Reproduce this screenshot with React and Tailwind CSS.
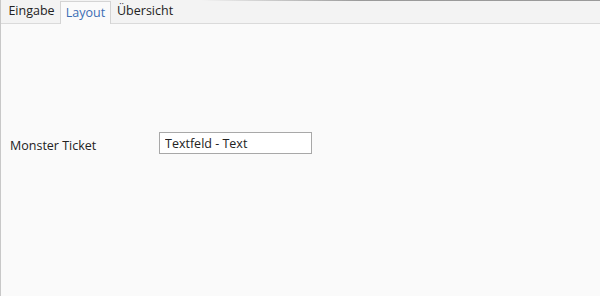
export default function App() {
  const tabs = [
    { label: "Eingabe", cls: "w-[59px] pl-[2px]" },
    { label: "Layout", cls: "w-[51px]", active: true },
    { label: "Übersicht", cls: "pl-[6px]" },
  ];

  return (
    <div className="w-[600px] h-[296px] flex flex-col bg-[#fafafa] border-l border-[#c8c8c8] font-['Open_Sans',sans-serif] text-[12.5px] text-[#222]">
      {/* Tab bar */}
      <div className="relative h-6 flex items-end bg-[#f3f3f3] border-b border-[#dadada]">
        <div className="absolute top-0 left-[200px] right-0 h-px bg-gradient-to-r from-[#f3f3f3] to-[#9a9a9a] to-40%" />
        {tabs.map((t) => (
          <div
            key={t.label}
            className={
              t.active
                ? `${t.cls} h-[23px] -mb-px flex items-center justify-center bg-[#fafafa] border-x border-t border-[#d4d4d4] text-[#3a6db5]`
                : `${t.cls} h-[23px] flex items-center justify-center`
            }
          >
            {t.label}
          </div>
        ))}
      </div>

      {/* Content */}
      <div className="flex-1 flex items-start pt-[108px] pl-[9px]">
        <div className="w-[149px] pt-[5px]">Monster Ticket</div>
        <input
          defaultValue="Textfeld - Text"
          className="w-[153px] h-[22px] px-[5px] bg-white border border-[#a8a8a8] outline-none text-[12.5px] text-[#222]"
        />
      </div>
    </div>
  );
}
